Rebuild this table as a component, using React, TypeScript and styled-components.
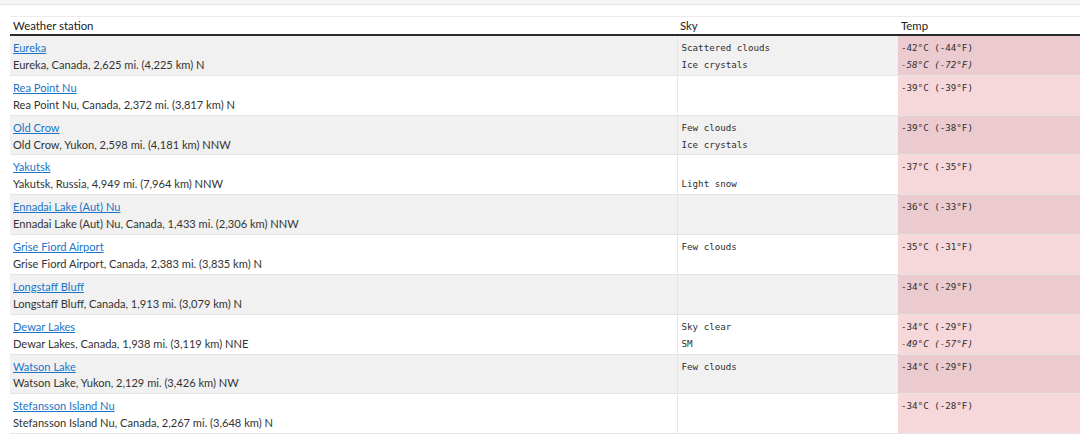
import styled, { createGlobalStyle } from "styled-components";

const GlobalStyle = createGlobalStyle`
  html, body {
    margin: 0;
    padding: 0;
    background: #ffffff;
    font-family: Lato, "Liberation Sans", sans-serif;
    color: #222;
  }
`;

const TopBar = styled.div`
  height: 4px;
  background: #f4f4f4;
  border-bottom: 1px solid #e3e3e3;
`;

const Wrapper = styled.div`
  padding: 11px 0 0 10px;
`;

const Table = styled.table`
  width: 100%;
  border-collapse: collapse;
  table-layout: fixed;
  border-top: 1px solid #ebebeb;
`;

const HeadCell = styled.th<{ $width?: number }>`
  box-sizing: border-box;
  text-align: left;
  font-weight: normal;
  font-size: 11.4px;
  line-height: 16px;
  padding: 1px 3px 0;
  color: #222;
  border-bottom: 2px solid #2b2b2b;
  ${(p) => (p.$width ? `width: ${p.$width}px;` : "")}
`;

const Row = styled.tr<{ $odd: boolean }>`
  background: ${(p) => (p.$odd ? "#f1f1f1" : "#ffffff")};
  border-bottom: 1px solid #e4e4e4;
`;

const StationCell = styled.td`
  vertical-align: top;
  padding: 4px 3px 1px;
  font-size: 11.1px;
  line-height: 16.9px;
  border-right: 1px solid #e6e6e6;

  a {
    color: #1a75c9;
    text-decoration: underline;
  }

  div {
    color: #333;
  }
`;

const Mono = styled.td`
  vertical-align: top;
  padding: 4px 4px 1px;
  font-family: "DejaVu Sans Mono", "Liberation Mono", monospace;
  font-size: 9.2px;
  line-height: 16.9px;
  color: #2e2e2e;

  i {
    display: block;
    font-style: italic;
  }
`;

const TempCell = styled(Mono)<{ $odd: boolean }>`
  padding-left: 3px;
  background: ${(p) => (p.$odd ? "#ebcbcf" : "#f6d7da")};
`;

type Station = {
  name: string;
  detail: string;
  sky: string[];
  temp: string;
  low?: string;
};

const stations: Station[] = [
  { name: "Eureka", detail: "Eureka, Canada, 2,625 mi. (4,225 km) N", sky: ["Scattered clouds", "Ice crystals"], temp: "-42°C (-44°F)", low: "-58°C (-72°F)" },
  { name: "Rea Point Nu", detail: "Rea Point Nu, Canada, 2,372 mi. (3,817 km) N", sky: [], temp: "-39°C (-39°F)" },
  { name: "Old Crow", detail: "Old Crow, Yukon, 2,598 mi. (4,181 km) NNW", sky: ["Few clouds", "Ice crystals"], temp: "-39°C (-38°F)" },
  { name: "Yakutsk", detail: "Yakutsk, Russia, 4,949 mi. (7,964 km) NNW", sky: ["", "Light snow"], temp: "-37°C (-35°F)" },
  { name: "Ennadai Lake (Aut) Nu", detail: "Ennadai Lake (Aut) Nu, Canada, 1,433 mi. (2,306 km) NNW", sky: [], temp: "-36°C (-33°F)" },
  { name: "Grise Fiord Airport", detail: "Grise Fiord Airport, Canada, 2,383 mi. (3,835 km) N", sky: ["Few clouds"], temp: "-35°C (-31°F)" },
  { name: "Longstaff Bluff", detail: "Longstaff Bluff, Canada, 1,913 mi. (3,079 km) N", sky: [], temp: "-34°C (-29°F)" },
  { name: "Dewar Lakes", detail: "Dewar Lakes, Canada, 1,938 mi. (3,119 km) NNE", sky: ["Sky clear", "SM"], temp: "-34°C (-29°F)", low: "-49°C (-57°F)" },
  { name: "Watson Lake", detail: "Watson Lake, Yukon, 2,129 mi. (3,426 km) NW", sky: ["Few clouds"], temp: "-34°C (-29°F)" },
  { name: "Stefansson Island Nu", detail: "Stefansson Island Nu, Canada, 2,267 mi. (3,648 km) N", sky: [], temp: "-34°C (-28°F)" },
];

export default function App() {
  return (
    <>
      <GlobalStyle />
      <TopBar />
      <Wrapper>
        <Table>
          <thead>
            <tr>
              <HeadCell $width={667}>Weather station</HeadCell>
              <HeadCell $width={221}>Sky</HeadCell>
              <HeadCell>Temp</HeadCell>
            </tr>
          </thead>
          <tbody>
            {stations.map((s, i) => {
              const odd = i % 2 === 0;
              return (
                <Row key={s.name} $odd={odd}>
                  <StationCell>
                    <a href="#">{s.name}</a>
                    <div>{s.detail}</div>
                  </StationCell>
                  <Mono>
                    {s.sky.map((line, j) => (
                      <div key={j}>{line || "\u00a0"}</div>
                    ))}
                  </Mono>
                  <TempCell $odd={odd}>
                    {s.temp}
                    {s.low && <i>{s.low}</i>}
                  </TempCell>
                </Row>
              );
            })}
          </tbody>
        </Table>
      </Wrapper>
    </>
  );
}
